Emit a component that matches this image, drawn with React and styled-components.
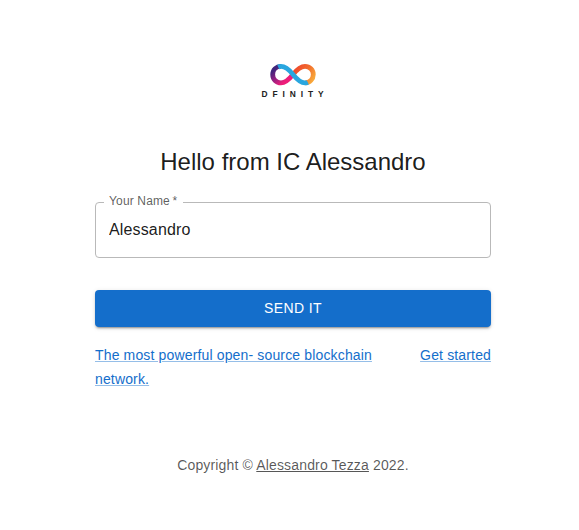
import React from "react";
import styled, { createGlobalStyle } from "styled-components";

const GlobalStyle = createGlobalStyle`
  *, *::before, *::after { box-sizing: border-box; }
  body {
    margin: 0;
    background: #fff;
    color: rgba(0, 0, 0, 0.9);
    font-family: "Liberation Sans", Helvetica, Arial, sans-serif;
    font-size: 16px;
    line-height: 24px;
    letter-spacing: 0.15px;
    -webkit-font-smoothing: antialiased;
  }
`;

const Page = styled.main`
  display: flex;
  flex-direction: column;
  width: 396px;
  height: 530px;
  margin-left: 95px;
  padding-top: 64px;
`;

const Brand = styled.div`
  display: flex;
  flex-direction: column;
  align-items: center;
  height: 82px;
`;

const Mark = styled.svg`
  display: block;
  width: 46px;
  height: 22px;
`;

const Wordmark = styled.span`
  margin: 3px 0 0 4px;
  font-size: 8.4px;
  font-weight: 700;
  line-height: 10px;
  letter-spacing: 4.9px;
  color: #222;
  white-space: nowrap;
`;

const Title = styled.h1`
  margin: 0 0 24px;
  font-size: 24px;
  font-weight: 400;
  line-height: 32px;
  letter-spacing: 0;
  text-align: center;
  white-space: nowrap;
`;

const Field = styled.fieldset`
  height: 62px;
  margin: -6px 0 32px;
  padding: 0 13px;
  border: 1px solid #b9b9b9;
  border-radius: 4px;
  min-width: 0;
`;

const Label = styled.legend`
  width: 79px;
  height: 12px;
  margin-left: -5px;
  padding: 0 0 0 5px;
  font-size: 12px;
  line-height: 10px;
  color: rgba(0, 0, 0, 0.65);
  white-space: nowrap;
`;

const Input = styled.input`
  display: block;
  width: 100%;
  height: 23px;
  margin-top: 10px;
  padding: 0;
  border: 0;
  outline: 0;
  background: transparent;
  color: inherit;
  font: inherit;
  letter-spacing: inherit;
`;

const Submit = styled.button`
  height: 37px;
  margin: 0 0 16px;
  padding: 0 0 2px;
  border: 0;
  border-radius: 4px;
  background: #146ecb;
  color: #fff;
  font: inherit;
  font-size: 14px;
  letter-spacing: 0.4px;
  box-shadow: 0 3px 1px -2px rgba(0, 0, 0, 0.2),
    0 2px 2px 0 rgba(0, 0, 0, 0.14), 0 1px 5px 0 rgba(0, 0, 0, 0.12);
`;

const Links = styled.nav`
  display: flex;
  align-items: flex-start;
  justify-content: space-between;
  height: 48px;
`;

const LinkCell = styled.div`
  width: ${({ $width }) => $width || "auto"};
  white-space: ${({ $width }) => ($width ? "normal" : "nowrap")};
`;

const Link = styled.a`
  color: ${({ $muted }) => ($muted ? "inherit" : "#146ecb")};
  font-size: 14px;
  letter-spacing: 0.15px;
  text-decoration: underline;
  text-decoration-color: ${({ $muted }) => ($muted ? "currentColor" : "rgba(20, 110, 203, 0.45)")};
`;

const Copyright = styled.footer`
  margin-top: 64px;
  font-size: 14px;
  line-height: 20px;
  text-align: center;
  color: rgba(0, 0, 0, 0.66);
`;

function InfinityMark() {
  return (
    <Mark viewBox="0 0 46 22" fill="none" strokeWidth="4.8" aria-hidden="true">
      <defs>
        <linearGradient id="warm" gradientUnits="userSpaceOnUse" x1="25" y1="5" x2="43" y2="16">
          <stop offset="0" stopColor="#ef4a2c" />
          <stop offset="0.5" stopColor="#f16a2d" />
          <stop offset="1" stopColor="#f8a83a" />
        </linearGradient>
        <linearGradient id="violet" gradientUnits="userSpaceOnUse" x1="5" y1="5" x2="18" y2="19">
          <stop offset="0" stopColor="#41257c" />
          <stop offset="0.4" stopColor="#982081" />
          <stop offset="0.8" stopColor="#ed1e79" />
        </linearGradient>
      </defs>
      <path d="M23 10.5C27 5.5 30.5 2.4 35 2.4C39.8 2.4 43.3 6 43.3 10.5S39.8 18.9 35 18.9" stroke="url(#warm)" />
      <path d="M23 10.5C19 15.5 15.5 18.9 11 18.9C6.2 18.9 2.7 15.3 2.7 10.5S6.2 2.4 11 2.4" stroke="url(#violet)" />
      <path d="M8.2 3C9.1 2.6 10 2.4 11 2.4C15.5 2.4 19 5.5 23 10.5S30.5 18.9 35 18.9C36 18.9 37 18.7 37.8 18.3" stroke="#29a6df" />
    </Mark>
  );
}

export default function App() {
  return (
    <>
      <GlobalStyle />
      <Page>
        <Brand>
          <InfinityMark />
          <Wordmark>DFINITY</Wordmark>
        </Brand>
        <Title>Hello from IC Alessandro</Title>
        <Field>
          <Label>Your Name{"\u2009"}*</Label>
          <Input aria-label="Your Name" defaultValue="Alessandro" />
        </Field>
        <Submit type="button">SEND IT</Submit>
        <Links>
          <LinkCell $width="300px">
            <Link href="#">The most powerful open- source blockchain network.</Link>
          </LinkCell>
          <LinkCell>
            <Link href="#">Get started</Link>
          </LinkCell>
        </Links>
        <Copyright>
          Copyright © <Link $muted href="#">Alessandro Tezza</Link> 2022.
        </Copyright>
      </Page>
    </>
  );
}
